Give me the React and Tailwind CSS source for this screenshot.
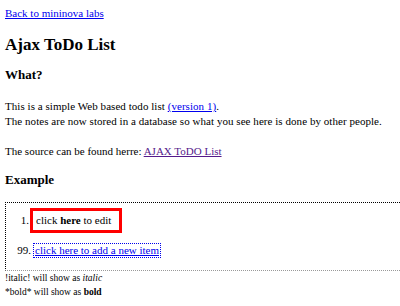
export default function App() {
  return (
    <div className="w-[400px] h-[306px] overflow-hidden bg-white text-black" style={{ fontFamily: '"Liberation Serif", "Times New Roman", serif' }}>
      <div className="pl-[5px] pt-[6px] w-[430px]">
        <a href="#" className="block text-[11px] leading-[15px] text-[#0000ee] underline">Back to mininova labs</a>
        <h1 className="mt-[14px] text-[17px] leading-[20px] font-bold">Ajax ToDo List</h1>
        <h2 className="mt-[12px] text-[13px] leading-[16px] font-bold">What?</h2>
        <p className="mt-[16px] text-[11px] leading-[15px] tracking-[0.05px]">
          This is a simple Web based todo list <a href="#" className="text-[#0000ee] underline">(version 1)</a>.<br />
          The notes are now stored in a database so what you see here is done by other people.
        </p>
        <p className="mt-[15px] text-[11px] leading-[15px]">
          The source can be found herre: <a href="#" className="text-[#551a8b] underline">AJAX ToDO List</a>
        </p>
        <h2 className="mt-[13px] text-[13px] leading-[16px] font-bold">Example</h2>
        <div className="mt-[14px] border border-dotted border-black border-b-[#999] pt-[5px] pb-[12px] text-[11px]">
          <div className="flex items-baseline">
            <span className="w-[24px] text-right pr-[1px] leading-[15px]">1.</span>
            <span className="border-[3px] border-[#ff0000] pl-[3px] pr-[8px] py-[2px] leading-[15px]">click <b>here</b> to edit</span>
          </div>
          <div className="flex items-baseline mt-[10px]">
            <span className="w-[27px] text-right pr-[2px] leading-[13px]">99.</span>
            <a href="#" className="border border-dotted border-[#0000ee] text-[#0000ee] underline px-px leading-[13px]">click here to add a new item</a>
          </div>
        </div>
        <div className="text-[9.5px] leading-[14px]">
          <div>!italic! will show as <i>italic</i></div>
          <div>*bold* will show as <b>bold</b></div>
        </div>
      </div>
    </div>
  );
}
